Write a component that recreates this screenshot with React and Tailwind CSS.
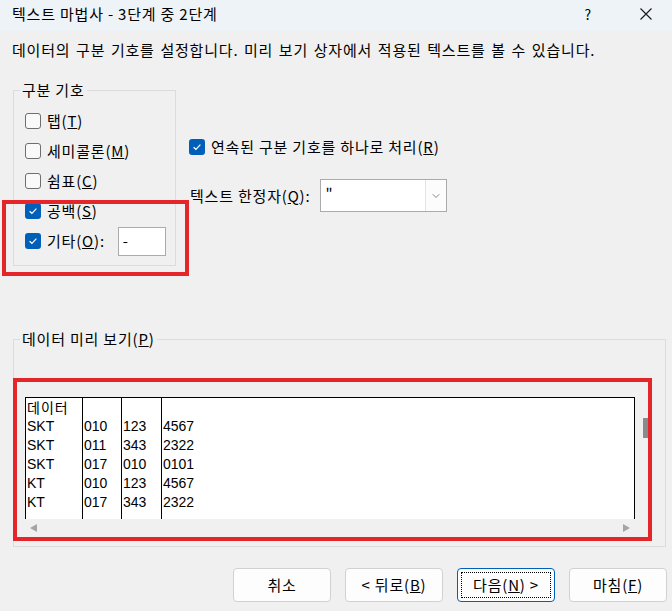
import { ChevronDown } from 'lucide-react'

function Box({ checked }) {
  if (checked) {
    return (
      <span className="w-[16px] h-[16px] shrink-0 rounded-[3px] bg-[#005fb8] flex items-center justify-center">
        <svg width="10" height="8" viewBox="0 0 10 8">
          <path d="M1.6 4.2 L3.9 6.3 L8.4 1.7" stroke="white" strokeWidth="1.2" fill="none" />
        </svg>
      </span>
    )
  }
  return <span className="w-[16px] h-[16px] shrink-0 rounded-[3px] border border-[#6e6e6e] bg-[#f9f9f9]" />
}

function Check({ checked, label, keyChar }) {
  return (
    <div className="h-[30px] flex items-center gap-[6px]">
      <Box checked={checked} />
      <span className="leading-[20px]">
        {label}(<u>{keyChar}</u>)
      </span>
    </div>
  )
}

function Button({ children, primary }) {
  return (
    <button
      className={
        'relative w-[98px] h-[34px] rounded-[4px] bg-[#fdfdfd] flex items-center justify-center leading-[20px] border ' +
        (primary ? 'border-[#005fb8]' : 'border-[#d1d1d1]')
      }
    >
      {primary && <span className="absolute inset-[3px] border border-dotted border-black" />}
      {children}
    </button>
  )
}

const rows = [
  ['데이터', '', '', ''],
  ['SKT', '010', '123', '4567'],
  ['SKT', '011', '343', '2322'],
  ['SKT', '017', '010', '0101'],
  ['KT', '010', '123', '4567'],
  ['KT', '017', '343', '2322'],
]

export default function App() {
  return (
    <div className="relative w-[672px] h-[611px] overflow-hidden bg-[#f0f0f0] text-[15px] tracking-[0.8px] text-black font-['Noto_Sans_CJK_KR','Liberation_Sans',sans-serif] flex flex-col">
      {/* title bar */}
      <div className="h-[31px] shrink-0 bg-[#eef3f8] flex items-start pt-[4px] pl-[12px]">
        <span className="leading-[20px]">텍스트 마법사 - 3단계 중 2단계</span>
        <span className="ml-auto leading-[20px] text-[14px]">?</span>
        <svg className="ml-[48px] mr-[20px] mt-[4px]" width="12" height="12" viewBox="0 0 12 12">
          <path d="M0.5 0.5 L11.5 11.5 M11.5 0.5 L0.5 11.5" stroke="#1a1a1a" strokeWidth="1.1" />
        </svg>
      </div>

      <p className="mt-[9px] ml-[12px] leading-[20px] [word-spacing:1.5px]">
        데이터의 구분 기호를 설정합니다. 미리 보기 상자에서 적용된 텍스트를 볼 수 있습니다.
      </p>

      {/* delimiters */}
      <div className="mt-[30px] flex">
        <div className="relative ml-[13px] w-[163px] h-[176px] border border-[#dcdcdc] pt-[15px] pl-[11px]">
          <span className="absolute -top-[11px] left-[6px] px-[2px] bg-[#f0f0f0] leading-[20px]">구분 기호</span>
          <Check label="탭" keyChar="T" />
          <Check label="세미콜론" keyChar="M" />
          <Check label="쉼표" keyChar="C" />
          <Check checked label="공백" keyChar="S" />
          <div className="h-[30px] flex items-center gap-[6px]">
            <Box checked />
            <span className="leading-[20px]">
              기타(<u>O</u>):
            </span>
            <div className="ml-[7px] w-[48px] h-[29px] bg-white border border-[#ababab] flex items-center pl-[4px] leading-[20px]">
              -
            </div>
          </div>
        </div>

        <div className="ml-[13px] pt-[47px]">
          <div className="h-[20px] flex items-center gap-[6px]">
            <Box checked />
            <span className="leading-[20px]">
              연속된 구분 기호를 하나로 처리(<u>R</u>)
            </span>
          </div>
          <div className="mt-[22px] flex items-center">
            <span className="ml-[1px] leading-[20px]">
              텍스트 한정자(<u>Q</u>):
            </span>
            <div className="ml-[10px] w-[127px] h-[33px] bg-white border border-[#ababab] flex">
              <span className="flex-1 pl-[4px] pt-[3px] leading-[20px]">"</span>
              <span className="w-[21px] border-l border-[#e3e3e3] bg-[#fcfcfc] flex items-center justify-center">
                <ChevronDown size={12} strokeWidth={1.4} color="#555" />
              </span>
            </div>
          </div>
        </div>
      </div>

      {/* preview */}
      <div className="relative mt-[73px] ml-[13px] w-[653px] h-[208px] shrink-0 border border-[#dcdcdc] pt-[57px] pl-[11px]">
        <span className="absolute -top-[11px] left-[6px] px-[2px] bg-[#f0f0f0] leading-[20px]">
          데이터 미리 보기(<u>P</u>)
        </span>
        <div className="flex">
          <div className="w-[610px]">
            <div className="h-[122px] bg-white border-t border-l border-r border-black flex text-[14px] tracking-normal font-['Liberation_Sans',sans-serif] leading-[19px]">
              {[56, 38, 39, 0].map((w, c) => (
                <div
                  key={c}
                  className={c < 3 ? 'border-r border-black' : 'flex-1'}
                  style={c < 3 ? { width: w + 1 } : undefined}
                >
                  {rows.map((r, i) => (
                    <div
                      key={i}
                      className={
                        'h-[19px] pl-[1px] ' +
                        (i === 0 && c === 0 ? "font-['Noto_Sans_CJK_KR',sans-serif] tracking-[1px]" : '')
                      }
                    >
                      {r[c]}
                    </div>
                  ))}
                </div>
              ))}
            </div>
            <div className="h-[18px] flex items-center justify-between px-[5px]">
              <svg width="7" height="8" viewBox="0 0 7 8">
                <path d="M7 0 L0 4 L7 8 Z" fill="#a5a5a5" />
              </svg>
              <svg width="7" height="8" viewBox="0 0 7 8">
                <path d="M0 0 L7 4 L0 8 Z" fill="#a5a5a5" />
              </svg>
            </div>
          </div>
          <div className="w-[17px] h-[122px] pt-[21px] pl-[8px]">
            <div className="w-[6px] h-[20px] bg-[#8a8a8a]" />
          </div>
        </div>
      </div>

      {/* buttons */}
      <div className="mt-[21px] flex justify-end gap-[14px] pr-[5px]">
        <Button>취소</Button>
        <Button>
          &lt; 뒤로(<u>B</u>)
        </Button>
        <Button primary>
          다음(<u>N</u>) &gt;
        </Button>
        <Button>
          마침(<u>F</u>)
        </Button>
      </div>

      {/* red highlight marks */}
      <div className="absolute left-[2px] top-[200px] w-[187px] h-[76px] border-4 border-[#e4262b]" />
      <div className="absolute left-[13px] top-[378px] w-[639px] h-[163px] border-4 border-[#e4262b]" />
    </div>
  )
}
